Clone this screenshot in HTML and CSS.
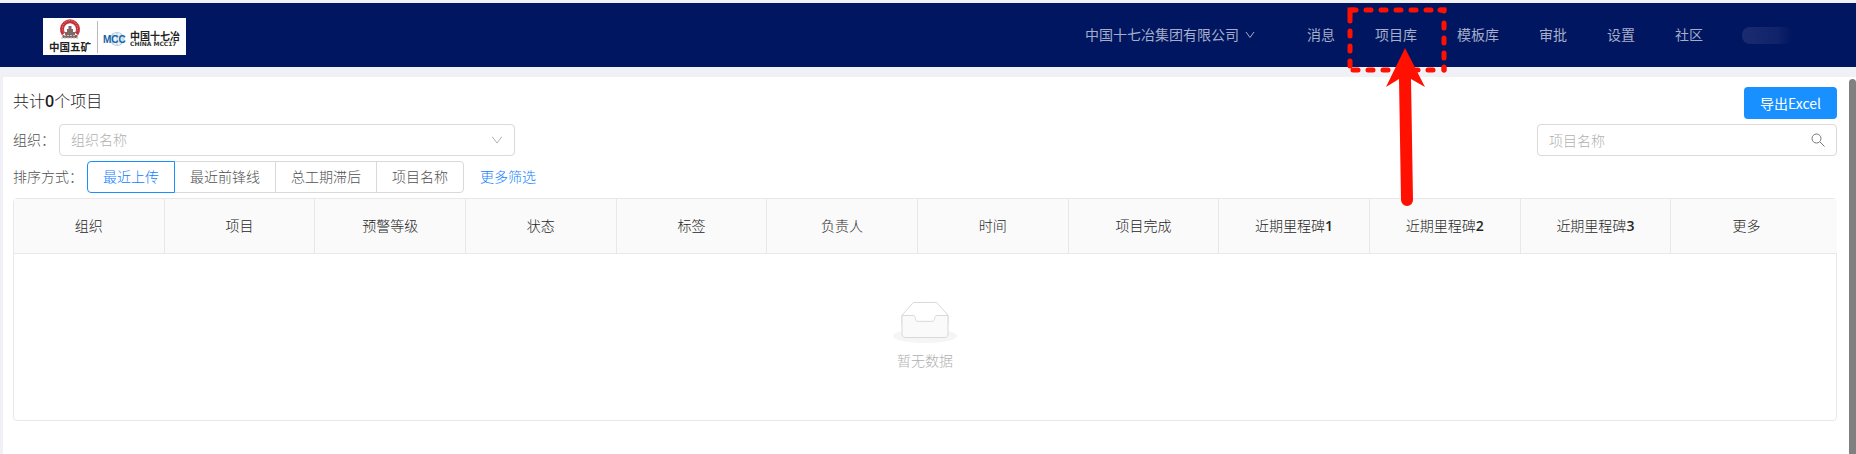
FILE: index.html
```
<!DOCTYPE html>
<html lang="zh-CN">
<head>
<meta charset="utf-8">
<title>项目库</title>
<link rel="stylesheet" href="styles.css">
</head>
<body>
<header class="topbar">
  <a class="brand" href="#" aria-label="首页">
    <svg class="brand-logo" viewBox="0 0 143 37" role="img" aria-label="中国五矿 中国十七冶">
      <path d="M20.500 16A8 8 0 1 1 33.500 16" fill="none" stroke="#c4333b" stroke-width="4"/>
      <path d="M21 14.500A7.500 7.500 0 1 1 33 14.500" fill="none" stroke="#e79a9d" stroke-width="1" stroke-dasharray="1 1.5"/>
      <path d="M25.500 8h3v3h1.500v3h2v3h2.500v3h-15v-3h2.500v-3h2v-3h1.500z" fill="#7d6868"/>
      <path d="M18 20h18M21 17.500h12" stroke="#c9bcbc" stroke-width="1" stroke-dasharray="2 1"/>
      <text class="logo-cn" x="6" y="33" font-size="10.500">中国五矿</text>
      <path d="M54.500 3v32" stroke="#b9b9b9"/>
      <ellipse cx="74" cy="21" rx="7" ry="6.500" fill="#eef5fa" stroke="#a8c4d8" stroke-width=".8"/>
      <path d="M67 18h14M66 24h16M74 14.500v13M70 15.500q-3 5.500 0 11M78 15.500q3 5.500 0 11" fill="none" stroke="#a8c4d8" stroke-width=".7"/>
      <text class="logo-mcc" x="60" y="25" font-size="10">MCC</text>
      <text class="logo-cn" x="87" y="22" font-size="10">中国十七冶</text>
      <text class="logo-en" x="87" y="28" font-size="6">CHINA MCC17</text>
    </svg>
  </a>
  <nav class="menu" aria-label="主导航">
    <button class="company" type="button">中国十七冶集团有限公司
      <svg class="chevron" viewBox="0 0 10 10"><path d="M1 2l4 5.500L9 2"/></svg>
    </button>
    <a href="#">消息</a>
    <a href="#" class="marked">项目库
      <svg class="marker" viewBox="0 0 102 204" aria-hidden="true">
        <path class="marker-box" d="M5 4H98M98 17V64M4 10V61M7 64H94"/>
        <path class="marker-corner" d="M4 9V4H8M94 4H98V5M98 61V64"/>
        <path class="marker-head" d="M59 42L79 81L65 73H53L40 81Z"/>
        <path class="marker-shaft" d="M59 72L61 194"/>
      </svg>
    </a>
    <a href="#">模板库</a>
    <a href="#">审批</a>
    <a href="#">设置</a>
    <a href="#">社区</a>
  </nav>
  <span class="user"></span>
</header>

<main class="page">
  <div class="row title-row">
    <h1>共计<b>0</b>个项目</h1>
    <button class="export" type="button">导出Excel</button>
  </div>
  <div class="row">
    <label for="org">组织：</label>
    <div class="select-wrap">
      <select id="org"><option>组织名称</option></select>
      <svg class="chevron" viewBox="0 0 10 10"><path d="M0 1.500l5 6.500L10 1.500"/></svg>
    </div>
    <div class="search">
      <input type="text" placeholder="项目名称" aria-label="项目名称">
      <svg viewBox="0 0 14 14"><circle cx="5.500" cy="5.500" r="4.500"/><path d="M9 9l4.500 4.500"/></svg>
    </div>
  </div>
  <div class="row sort-row">
    <span id="sort">排序方式：</span>
    <div class="sort" role="group" aria-labelledby="sort">
      <button class="active" type="button" aria-pressed="true">最近上传</button>
      <button type="button">最近前锋线</button>
      <button type="button">总工期滞后</button>
      <button type="button">项目名称</button>
    </div>
    <a class="more" href="#">更多筛选</a>
  </div>
  <div class="table-card">
    <div class="table-head">
      <table>
        <thead>
          <tr><th>组织</th><th>项目</th><th>预警等级</th><th>状态</th><th>标签</th><th>负责人</th><th>时间</th><th>项目完成</th><th>近期里程碑<b>1</b></th><th>近期里程碑<b>2</b></th><th>近期里程碑<b>3</b></th><th>更多</th></tr>
        </thead>
      </table>
    </div>
    <div class="empty">
      <svg viewBox="0 0 64 41" aria-hidden="true">
        <ellipse cx="32" cy="34" rx="32" ry="7" fill="#f5f5f5"/>
        <g fill="#fff" stroke="#d9d9d9" transform="translate(0 .5)">
          <path d="M55 12.760L44.854 1.258C44.367.474 43.656 0 42.907 0H21.093c-.749 0-1.460.474-1.947 1.257L9 12.761V22h46v-9.240z"/>
          <path d="M41.613 15.931c0-1.605.994-2.930 2.227-2.931H55v18.137C55 33.260 53.680 35 52.050 35h-40.100C10.320 35 9 33.259 9 31.137V13h11.160c1.233 0 2.227 1.323 2.227 2.928v.022c0 1.605 1.005 2.901 2.237 2.901h14.752c1.232 0 2.237-1.308 2.237-2.913v-.007z" fill="#fafafa"/>
        </g>
      </svg>
      <p>暂无数据</p>
    </div>
  </div>
  <span class="scroll-thumb" aria-hidden="true"></span>
</main>
</body>
</html>
```
FILE: styles.css
```
* { box-sizing: border-box; }

html { height: 100%; }

body {
  display: flex;
  flex-direction: column;
  min-height: 100%;
  margin: 0;
  padding: 3px 0 0 3px;
  background: #f0f1f6;
  color: #505050;
  font: 14px/22px "Open Sans", "Noto Sans CJK SC", sans-serif;
  font-weight: 300;
}

button, input, select { font: inherit; color: inherit; }
a { color: inherit; text-decoration: none; }
b { font-weight: 600; }

/* Top bar */
.topbar {
  display: flex;
  align-items: center;
  height: 64px;
  margin-left: -3px;
  padding: 0 64px 0 43px;
  background: #001660;
  color: #a6adc8;
  font-weight: 400;
}
.brand { display: block; margin-top: 2px; background: #fff; }
.brand-logo { display: block; width: 143px; height: 37px; }
.logo-cn { font-family: "Noto Sans CJK SC", sans-serif; font-weight: 700; fill: #222; }
.logo-mcc { font-family: "Liberation Sans", sans-serif; font-weight: 700; fill: #1664a5; }
.logo-en { font-family: "DejaVu Sans", sans-serif; font-weight: 700; fill: #333; }

.menu { display: flex; align-items: center; gap: 40px; margin-left: auto; }
.company {
  display: flex;
  align-items: center;
  gap: 6px;
  margin-right: 12px;
  padding: 0;
  border: 0;
  background: none;
}
.chevron { width: 10px; height: 10px; fill: none; stroke: currentColor; }
.user {
  width: 50px;
  height: 17px;
  margin-left: 39px;
  border-radius: 8px;
  background: linear-gradient(90deg, #1b2b6f, #10236b 70%, #001660);
}

.marked { position: relative; }
.marker {
  position: absolute;
  top: -18px;
  left: -29px;
  z-index: 2;
  width: 102px;
  height: 204px;
  pointer-events: none;
}
.marker-box { fill: none; stroke: #ff1000; stroke-width: 5; stroke-linecap: round; stroke-dasharray: 5 10; }
.marker-corner { fill: none; stroke: #ff1000; stroke-width: 5; stroke-linecap: round; }
.marker-head { fill: #ff1000; }
.marker-shaft { fill: none; stroke: #ff1000; stroke-width: 12; stroke-linecap: round; }

/* Page */
.page {
  position: relative;
  flex: 1;
  margin-top: 10px;
  padding: 10px 19px 34px 10px;
  background: #fff;
}
.row { display: flex; align-items: center; margin-bottom: 5px; }
.title-row { align-items: flex-start; }
h1 { margin: 0; color: #1a1a1a; font-size: 16px; font-weight: 300; line-height: 28px; }
.export {
  height: 32px;
  margin-left: auto;
  padding: 0 16px;
  border: 0;
  border-radius: 4px;
  background: #1890ff;
  color: #fff;
  font-family: "Noto Sans CJK SC", sans-serif;
  font-weight: 400;
}

.select-wrap { position: relative; width: 456px; margin-left: 4px; color: #b0b0b0; }
select, input {
  display: block;
  width: 100%;
  height: 32px;
  padding: 0 11px;
  border: 1px solid #d9d9d9;
  border-radius: 4px;
  background: #fff;
  appearance: none;
}
.select-wrap .chevron { position: absolute; top: 11px; right: 13px; }
.search { position: relative; width: 300px; margin-left: auto; }
.search input::placeholder { color: #b0b0b0; opacity: 1; }
.search svg {
  position: absolute;
  top: 9px;
  right: 12px;
  width: 14px;
  height: 14px;
  fill: none;
  stroke: #777;
}

.sort { display: flex; margin-left: 4px; }
.sort button {
  height: 32px;
  margin-left: -1px;
  padding: 0 15px;
  border: 1px solid #d9d9d9;
  background: #fff;
}
.sort button:first-child { margin-left: 0; border-radius: 4px 0 0 4px; }
.sort button:last-child { border-radius: 0 4px 4px 0; }
.sort .active { position: relative; border-color: #1890ff; color: #1080ff; }
.more { margin-left: 16px; color: #1080ff; }

/* Table */
.table-card { border: 1px solid #e8e8e8; border-radius: 4px; }
.table-head { margin-right: -1px; padding-right: 15px; background: #fafafa; border-bottom: 1px solid #e8e8e8; }
table { width: 100%; border-collapse: separate; border-spacing: 0; table-layout: fixed; }
th {
  height: 54px;
  padding: 0;
  border-right: 1px solid #e8e8e8;
  color: #262626;
  font-weight: 300;
}
th:last-child { border-right: 0; }
.empty { padding: 48px 0; color: #b0b0b0; text-align: center; }
.empty svg { display: block; width: 64px; height: 41px; margin: 0 auto 7px; }
.empty p { margin: 0; }

.scroll-thumb {
  position: absolute;
  top: 2px;
  right: 0;
  bottom: 0;
  width: 7px;
  border-radius: 4px 4px 0 0;
  background: #808080;
}
```
